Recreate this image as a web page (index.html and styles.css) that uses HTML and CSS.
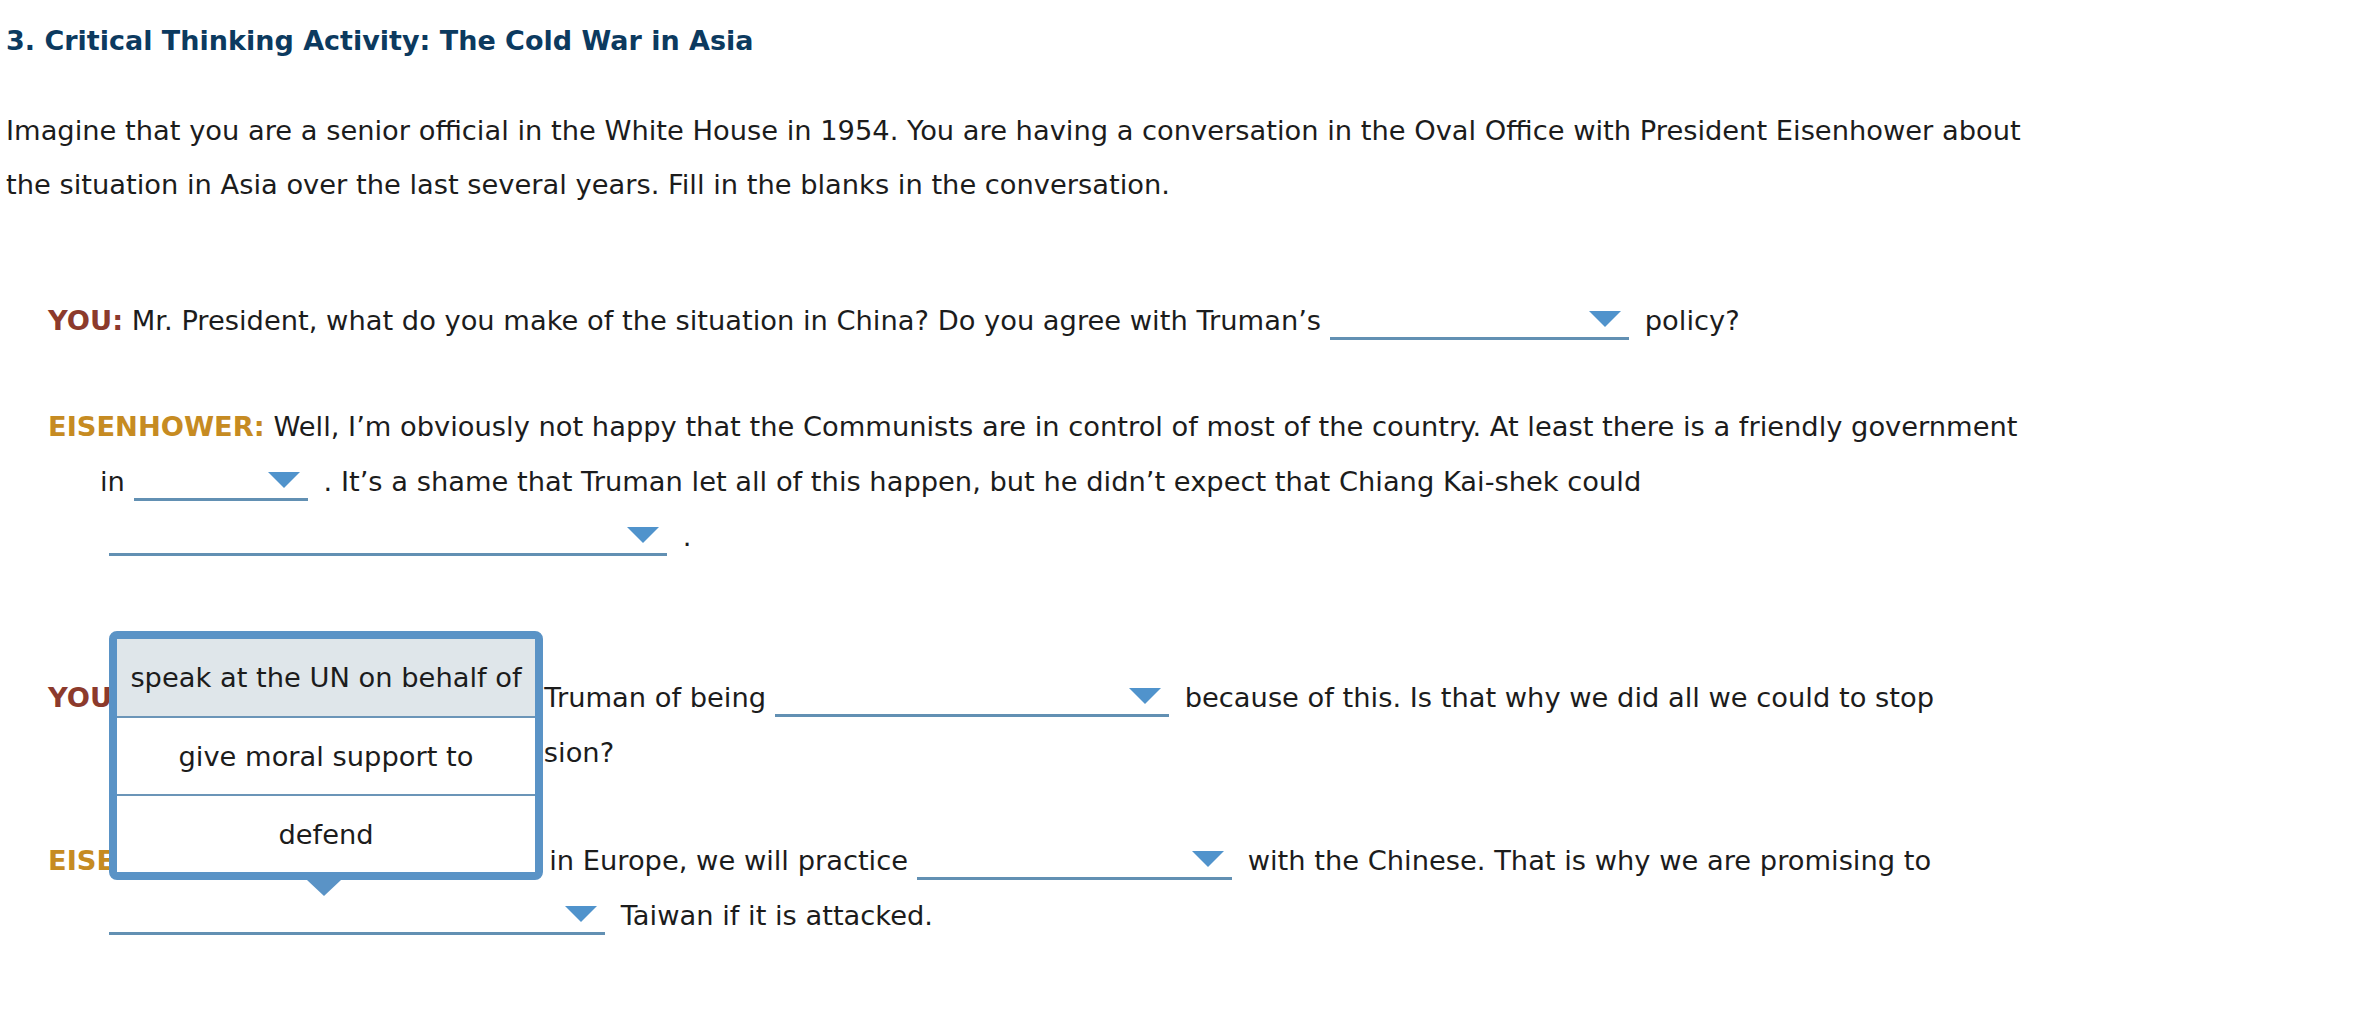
FILE: index.html
```html
<!DOCTYPE html>
<html lang="en">
<head>
<meta charset="utf-8">
<title>Critical Thinking Activity: The Cold War in Asia</title>
<link rel="stylesheet" href="styles.css">
</head>
<body>
<main class="page">
  <h3 class="title">3. Critical Thinking Activity: The Cold War in Asia</h3>
  <p class="intro">Imagine that you are a senior official in the White House in 1954. You are having a conversation in the Oval Office with President Eisenhower about the situation in Asia over the last several years. Fill in the blanks in the conversation.</p>

  <div class="dialogue">
    <div class="line"><b class="speaker speaker--you">YOU:</b> Mr. President, what do you make of the situation in China? Do you agree with Truman’s<wbr><span class="blank blank--policy"></span> policy?</div>

    <div class="line"><b class="speaker speaker--ike">EISENHOWER:</b> Well, I’m obviously not happy that the Communists are in control of most of the country. At least there is a friendly government in<wbr><span class="blank blank--place"></span> . It’s a shame that Truman let all of this happen, but he didn’t expect that Chiang Kai-shek could<wbr><span class="blank blank--could"></span> .</div>

    <div class="line line--spaced"><b class="speaker speaker--you">YOU:</b> Some Senators have accused Truman of being<wbr><span class="blank blank--being"></span> because of this. Is that why we did all we could to stop &nbsp;Communist pressure and expansion?</div>

    <div class="line line--last"><b class="speaker speaker--ike">EISENHOWER:</b> Just as we’re acting in Europe, we will practice<wbr><span class="blank blank--practice"></span> with the Chinese. That is why we are promising to<wbr><span class="blank blank--promise blank--open"><span class="menu" role="listbox"><span class="option option--active" role="option">speak at the UN on behalf of</span><span class="option" role="option">give moral support to</span><span class="option" role="option">defend</span></span></span> Taiwan if it is attacked.</div>
  </div>
</main>
</body>
</html>
```

FILE: styles.css
```css
* {
  box-sizing: border-box;
}

body {
  margin: 0;
  background: #ffffff;
  color: #1c1c1c;
  font-family: "DejaVu Sans", Verdana, sans-serif;
}

.page {
  width: 2034px;
  padding-left: 6px;
}

.title {
  margin: 14px 0 0;
  font-size: 27px;
  line-height: 54px;
  font-weight: bold;
  color: #0c3a5f;
}

.intro {
  margin: 36px 0 0;
  font-size: 27.3px;
  line-height: 54px;
}

.dialogue {
  margin-top: 81px;
}

.line {
  margin-top: 51px;
  padding-left: 94px;
  text-indent: -52px;
  font-size: 27.3px;
  line-height: 55px;
}

.line:first-child {
  margin-top: 0;
}

.line--spaced {
  margin-top: 106px;
}

.line--last {
  margin-top: 53px;
}

.speaker {
  font-weight: bold;
}

.speaker--you {
  color: #8c3a2c;
}

.speaker--ike {
  color: #c68b22;
}

/* blank with a dropdown */
.blank {
  display: inline-block;
  position: relative;
  height: 30px;
  margin: 0 7px 0 9px;
  border-bottom: 3px solid #6290b3;
  vertical-align: -10px;
  text-indent: 0;
}

.blank::after {
  content: "";
  position: absolute;
  right: 8px;
  top: 1px;
  border-left: 16px solid transparent;
  border-right: 16px solid transparent;
  border-top: 16px solid #5093cc;
}

.blank--policy { width: 299px; }
.blank--place { width: 174px; }
.blank--could { width: 558px; }
.blank--being { width: 394px; }
.blank--practice { width: 315px; }
.blank--promise { width: 496px; }

/* open menu above a blank */
.menu {
  position: absolute;
  left: 0;
  bottom: calc(100% + 25px);
  z-index: 2;
  display: flex;
  flex-direction: column;
  width: 434px;
  border: 8px solid #5a93c6;
  border-radius: 8px;
  background: #ffffff;
  text-indent: 0;
  line-height: normal;
}

.menu::after {
  content: "";
  position: absolute;
  top: calc(100% + 8px);
  left: 50%;
  margin-left: -19px;
  border-left: 17px solid transparent;
  border-right: 17px solid transparent;
  border-top: 16px solid #5a93c6;
}

.option {
  display: flex;
  align-items: center;
  justify-content: center;
  height: 78px;
  border-top: 2px solid #6b95b8;
  color: #1c1c1c;
  white-space: nowrap;
}

.option:first-child {
  height: 77px;
  border-top: 0;
}

.option--active {
  background: #dfe6ea;
}
```
